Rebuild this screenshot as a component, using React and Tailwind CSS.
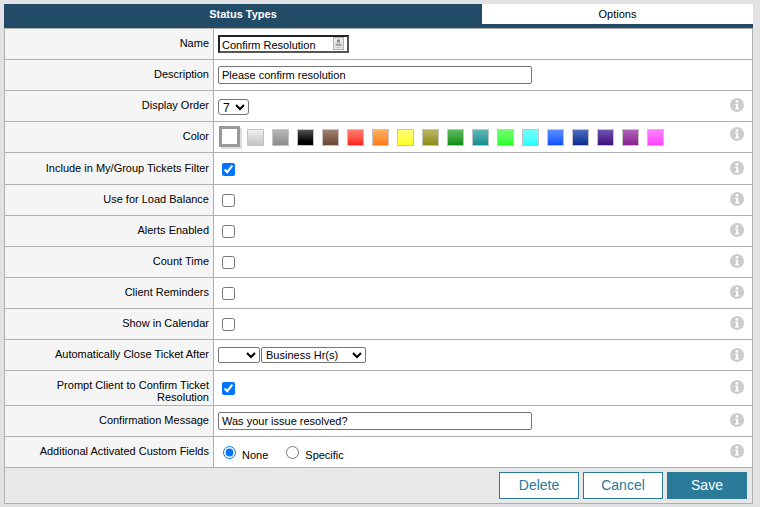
import React from "react";

const swatches = [
  "from-[#eeeeee] to-[#c4c4c4]",
  "from-[#b8b8b8] to-[#8a8a8a]",
  "from-[#555555] to-[#000000]",
  "from-[#a08272] to-[#6b4630]",
  "from-[#ff7a70] to-[#ff1a10]",
  "from-[#ffb060] to-[#ff7a08]",
  "from-[#ffff70] to-[#ffff20]",
  "from-[#bcb860] to-[#8f8a10]",
  "from-[#5cb860] to-[#0a8f10]",
  "from-[#5cb8b8] to-[#0a8f8f]",
  "from-[#70ff70] to-[#20ff20]",
  "from-[#70ffff] to-[#20ffff]",
  "from-[#5c8cff] to-[#0a50ff]",
  "from-[#4c6cc0] to-[#0a2c90]",
  "from-[#7050b0] to-[#400a80]",
  "from-[#b060b8] to-[#8a2090]",
  "from-[#ff80ff] to-[#ff40ff]",
];

const InfoIcon = () => (
  <svg width="14" height="14" viewBox="0 0 14 14" className="shrink-0">
    <circle cx="7" cy="7" r="7" fill="#cccccc" />
    <circle cx="7" cy="3.4" r="1.4" fill="#ffffff" />
    <path d="M5.2 5.8h2.9v4.3h1v1.3H5.1v-1.3h1V7.1h-.9z" fill="#ffffff" />
  </svg>
);

const Row = ({ label, children, height = "h-[31px]", info = true, labelPad = "pt-[8px]", infoPad = "pt-[7px]" }) => (
  <div className={`flex ${height} border-b border-[#b0b0b0]`}>
    <div className={`w-[209px] shrink-0 bg-[#f5f5f5] border-r border-[#b0b0b0] pr-1 pl-2 ${labelPad} text-right leading-[12px]`}>
      {label}
    </div>
    <div className="flex-1 flex justify-between pl-1 pr-2 min-w-0">
      <div className="flex items-start pt-[6px]">{children}</div>
      {info && (
        <div className={infoPad}>
          <InfoIcon />
        </div>
      )}
    </div>
  </div>
);

const Check = ({ checked, top = "mt-[3px]" }) => (
  <input type="checkbox" defaultChecked={checked} className={`w-[13px] h-[13px] ml-[4px] ${top}`} />
);

export default function App() {
  return (
    <div className="w-[760px] h-[507px] bg-[#e0e2e4] p-1 text-[11px] text-black font-['Liberation_Sans',Arial,sans-serif] overflow-hidden">
      <div className="w-[749px] h-[500px] flex flex-col border-x border-b border-[#b0b0b0] bg-white">
        <div className="flex h-[20px] -mx-px shrink-0">
          <div className="w-[478px] bg-[#214b67] text-white font-bold flex items-center justify-center">Status Types</div>
          <div className="flex-1 bg-white flex items-center justify-center">Options</div>
        </div>
        <div className="h-[5px] -mx-px shrink-0 bg-[#214b67] border-b border-[#b0b0b0]"></div>

        <Row label="Name" info={false}>
          <div className="relative w-[131px] h-[18px] border-2 border-[#222222] border-r-[#555555] border-b-[#555555]">
            <input defaultValue="Confirm Resolution" className="w-full h-full pl-[2px] pr-5 outline-none text-[11px] leading-[12px] pb-[3px]" />
            <svg width="11" height="13" viewBox="0 0 11 13" className="absolute right-[3px] top-0">
              <rect x="0.5" y="0.5" width="10" height="12" fill="#e8e8e8" stroke="#b0b0b0" />
              <rect x="4" y="2.5" width="3" height="3" fill="#888888" />
              <path d="M2.5 6.5h6v2.5h-6z" fill="#a4a4a4" />
              <path d="M2.5 10h6v1h-6z" fill="#c8c8c8" />
            </svg>
          </div>
        </Row>
        <Row label="Description" info={false}>
          <input
            defaultValue="Please confirm resolution"
            className="w-[314px] h-[18px] border border-[#767676] rounded-[2px] px-[3px] text-[11px]"
          />
        </Row>
        <Row label="Display Order">
          <select defaultValue="7" className="w-[31px] h-[16px] mt-[2px] border border-[#767676] rounded-[3px] text-[12px] bg-white">
            <option>7</option>
          </select>
        </Row>
        <Row label="Color" infoPad="pt-[5px]">
          <div className="flex items-start gap-[7px] -mt-[2px]">
            <div className="w-[21px] h-[21px] ml-[1px] bg-white border-[3px] border-[#999999] shadow-[2px_2px_0_#dddddd]"></div>
            <div className="flex gap-[8px] mt-[3px]">
              {swatches.map((s) => (
                <div key={s} className={`w-[17px] h-[17px] bg-gradient-to-b ${s} border border-[#c4c4c4]`}></div>
              ))}
            </div>
          </div>
        </Row>
        <Row label="Include in My/Group Tickets Filter" height="h-[32px]" labelPad="pt-[9px]" infoPad="pt-[8px]">
          <Check checked top="mt-[4px]" />
        </Row>
        <Row label="Use for Load Balance"><Check /></Row>
        <Row label="Alerts Enabled"><Check /></Row>
        <Row label="Count Time"><Check /></Row>
        <Row label="Client Reminders"><Check /></Row>
        <Row label="Show in Calendar"><Check /></Row>
        <Row label="Automatically Close Ticket After" infoPad="pt-[8px]">
          <div className="flex gap-px mt-[1px]">
            <select className="w-[42px] h-[16px] border border-[#767676] rounded-[2px] text-[12px] bg-white">
              <option></option>
            </select>
            <select defaultValue="Business Hr(s)" className="w-[105px] h-[16px] border border-[#767676] rounded-[2px] text-[11px] bg-white">
              <option>Business Hr(s)</option>
            </select>
          </div>
        </Row>
        <Row label="Prompt Client to Confirm Ticket Resolution" height="h-[35px]" infoPad="pt-[9px]">
          <Check checked top="mt-[5px]" />
        </Row>
        <Row label="Confirmation Message">
          <input
            defaultValue="Was your issue resolved?"
            className="w-[314px] h-[18px] border border-[#767676] rounded-[2px] px-[3px] text-[11px]"
          />
        </Row>
        <Row label="Additional Activated Custom Fields">
          <div className="flex items-start">
            <input type="radio" name="fields" defaultChecked className="w-[13px] h-[13px] mt-[3px] ml-[5px] mr-[6px]" />
            <span className="mr-[18px] mt-[6px] leading-[12px]">None</span>
            <input type="radio" name="fields" className="w-[13px] h-[13px] mt-[3px] mr-[6px]" />
            <span className="mt-[6px] leading-[12px]">Specific</span>
          </div>
        </Row>

        <div className="flex-1 bg-[#e8e8e8] flex justify-end items-start gap-1 pt-[4px] pr-[5px]">
          <button className="w-[80px] h-[27px] bg-white border border-[#2a7a99] text-[#2a7a99] text-[14px]">Delete</button>
          <button className="w-[80px] h-[27px] bg-white border border-[#2a7a99] text-[#2a7a99] text-[14px]">Cancel</button>
          <button className="w-[80px] h-[27px] bg-[#2a7a99] text-white text-[14px]">Save</button>
        </div>
      </div>
    </div>
  );
}
